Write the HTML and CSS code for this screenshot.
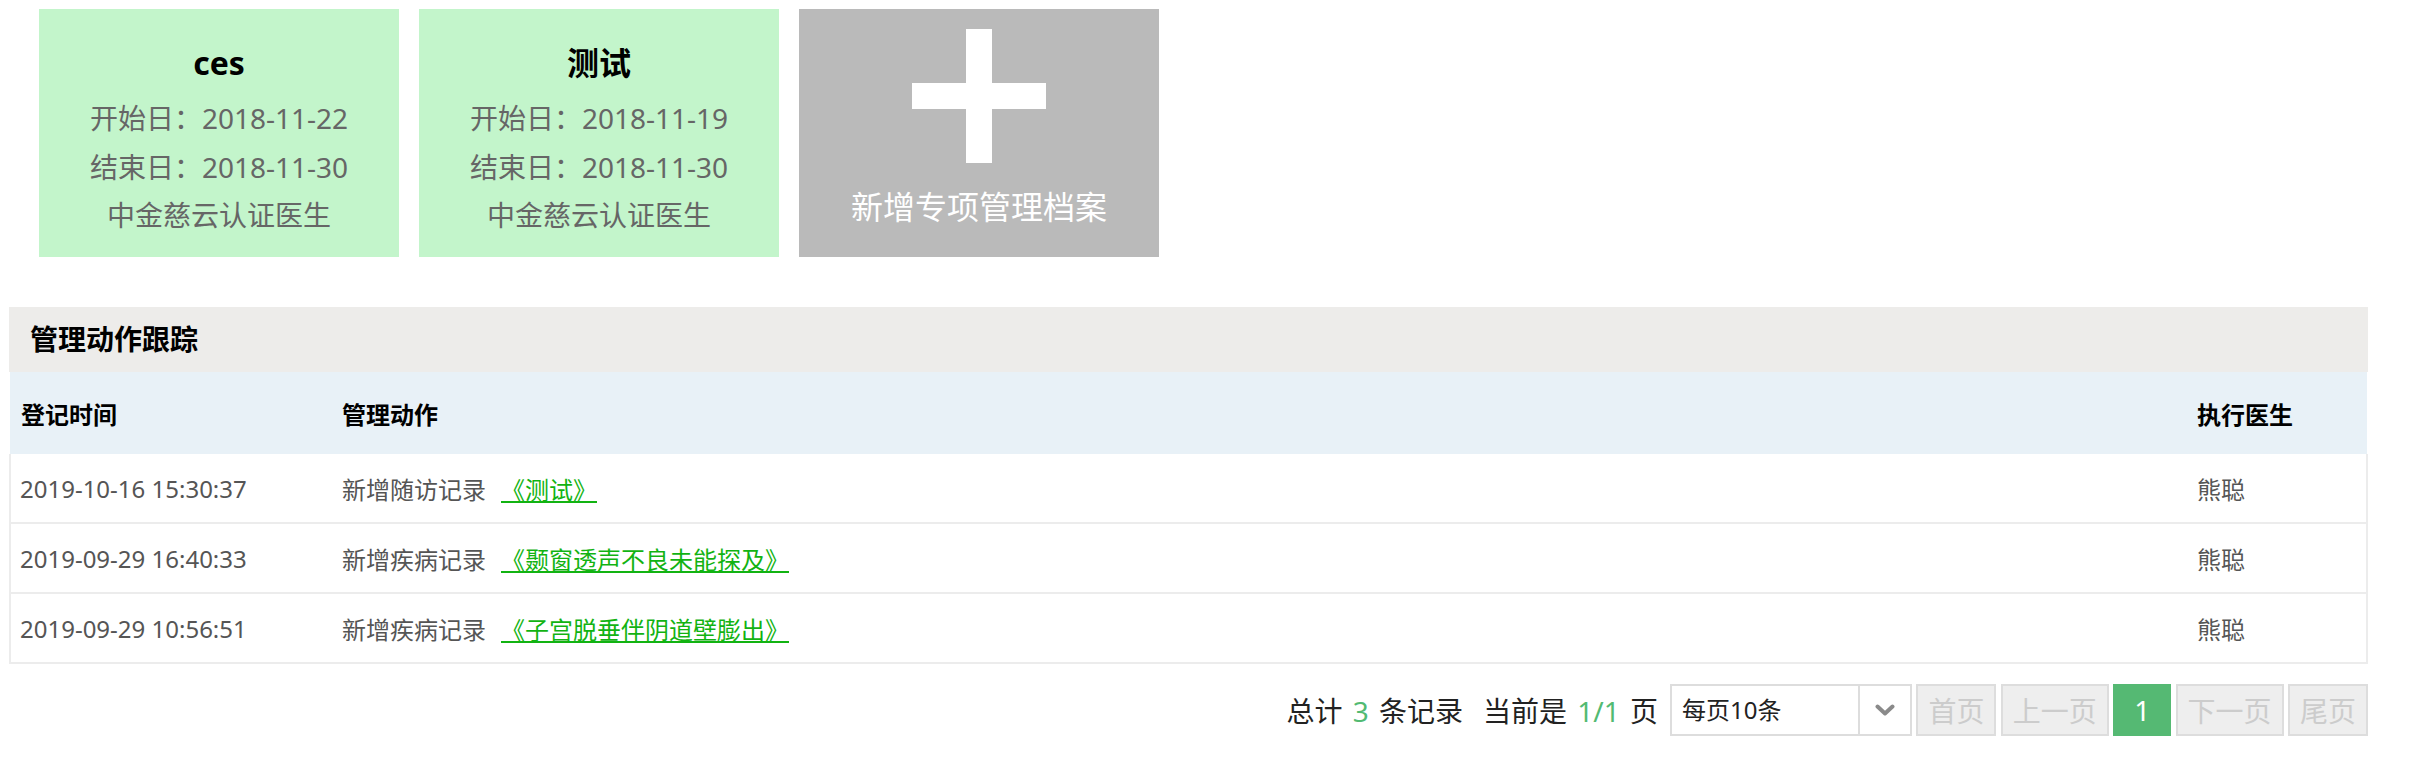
FILE: index.html
```html
<!DOCTYPE html>
<html lang="zh-CN">
<head>
<meta charset="utf-8">
<title>专项管理档案</title>
<link rel="stylesheet" href="styles.css">
</head>
<body>
<div class="page">
  <div class="cards">
    <div class="card card-plan">
      <div class="card-title">ces</div>
      <div class="card-line">开始日：2018-11-22</div>
      <div class="card-line">结束日：2018-11-30</div>
      <div class="card-line">中金慈云认证医生</div>
    </div>
    <div class="card card-plan">
      <div class="card-title">测试</div>
      <div class="card-line">开始日：2018-11-19</div>
      <div class="card-line">结束日：2018-11-30</div>
      <div class="card-line">中金慈云认证医生</div>
    </div>
    <div class="card card-add">
      <svg class="plus" width="134" height="134" viewBox="0 0 134 134">
        <rect x="54" y="0" width="26" height="134" fill="#fff"/>
        <rect x="0" y="54" width="134" height="26" fill="#fff"/>
      </svg>
      <div class="add-text">新增专项管理档案</div>
    </div>
  </div>

  <div class="panel">
    <div class="panel-title">管理动作跟踪</div>
    <table class="log">
      <colgroup>
        <col class="col-time">
        <col>
        <col class="col-doc">
      </colgroup>
      <thead>
        <tr><th>登记时间</th><th>管理动作</th><th>执行医生</th></tr>
      </thead>
      <tbody>
        <tr><td>2019-10-16 15:30:37</td><td>新增随访记录<a class="rec-link" href="#">《测试》</a></td><td>熊聪</td></tr>
        <tr><td>2019-09-29 16:40:33</td><td>新增疾病记录<a class="rec-link" href="#">《颞窗透声不良未能探及》</a></td><td>熊聪</td></tr>
        <tr><td>2019-09-29 10:56:51</td><td>新增疾病记录<a class="rec-link" href="#">《子宫脱垂伴阴道壁膨出》</a></td><td>熊聪</td></tr>
      </tbody>
    </table>
  </div>

  <div class="pager">
    <div class="pager-info">总计 <span class="num">3</span> 条记录<span class="sep">当前是 <span class="num">1/1</span> 页</span></div>
    <div class="select">
      <div class="select-text">每页10条</div>
      <div class="select-arrow">
        <svg width="20" height="12" viewBox="0 0 20 12"><polyline points="2.5,2.5 10,9.5 17.5,2.5" fill="none" stroke="#8a8a8a" stroke-width="4" stroke-linecap="round" stroke-linejoin="round"/></svg>
      </div>
    </div>
    <div class="btn">首页</div>
    <div class="btn">上一页</div>
    <div class="btn btn-active">1</div>
    <div class="btn">下一页</div>
    <div class="btn">尾页</div>
  </div>
</div>
</body>
</html>
```
FILE: styles.css
```css
body {
  margin: 0;
  background: #fff;
  font-family: "Noto Sans", "Noto Sans CJK SC", sans-serif;
  color: #333;
}

.page {
  margin-left: 9px;
  width: 2359px;
}

/* cards */
.cards {
  display: flex;
  gap: 20px;
  padding: 9px 0 0 30px;
}

.card {
  width: 360px;
  height: 248px;
  box-sizing: border-box;
}

.card-plan {
  background: #c3f5cb;
  padding-top: 30px;
  text-align: center;
  color: #666;
}

.card-title {
  font-size: 32px;
  font-weight: 700;
  color: #000;
  line-height: 48px;
  margin-bottom: 7px;
}

.card-line {
  font-size: 28px;
  line-height: 48.5px;
}

.card-add {
  background: #bababa;
  display: flex;
  flex-direction: column;
  align-items: center;
  padding-top: 20px;
}

.plus {
  display: block;
}

.add-text {
  margin-top: 24px;
  font-size: 32px;
  line-height: 40px;
  color: #fff;
}

/* panel */
.panel {
  margin-top: 50px;
}

.panel-title {
  height: 65px;
  line-height: 65px;
  background: #edecea;
  padding-left: 21px;
  font-size: 28px;
  font-weight: 700;
  color: #000;
}

.log {
  width: 100%;
  border-collapse: collapse;
  table-layout: fixed;
  font-size: 24px;
}

.col-time {
  width: 322px;
}

.col-doc {
  width: 180px;
}

.log th {
  height: 82px;
  background: #e8f1f7;
  text-align: left;
  font-weight: 700;
  color: #000;
  padding: 0 0 0 10px;
}

.log th:first-child {
  padding-left: 11px;
}

.log td {
  height: 68px;
  padding: 0 0 0 10px;
  color: #555;
  border-bottom: 2px solid #ececec;
}

.log td:first-child {
  border-left: 2px solid #ececec;
  padding-left: 9px;
}

.log td:last-child {
  border-right: 2px solid #ececec;
}

.rec-link {
  margin-left: 15px;
  color: #12b312;
  text-decoration: underline;
}

/* pager */
.pager {
  margin-top: 20px;
  display: flex;
  justify-content: flex-end;
  align-items: center;
}

.pager-info {
  font-size: 28px;
  color: #222;
  margin-right: 12px;
  word-spacing: 3px;
}

.num {
  color: #52ba72;
}

.sep {
  margin-left: 20px;
}

.select {
  width: 242px;
  height: 52px;
  box-sizing: border-box;
  border: 2px solid #ddd;
  display: flex;
  font-size: 24px;
  color: #222;
}

.select-text {
  flex: 1;
  padding-left: 10px;
  line-height: 48px;
}

.select-arrow {
  width: 50px;
  border-left: 2px solid #ddd;
  display: flex;
  align-items: center;
  justify-content: center;
}

.btn {
  height: 52px;
  min-width: 58px;
  box-sizing: border-box;
  padding: 0 10px;
  border: 2px solid #ddd;
  background: #eee;
  color: #ccc;
  margin-left: 4.4px;
  display: flex;
  align-items: center;
  justify-content: center;
  font-size: 28px;
}

.btn-active {
  background: #55b973;
  border-color: #55b973;
  color: #fff;
}
```
